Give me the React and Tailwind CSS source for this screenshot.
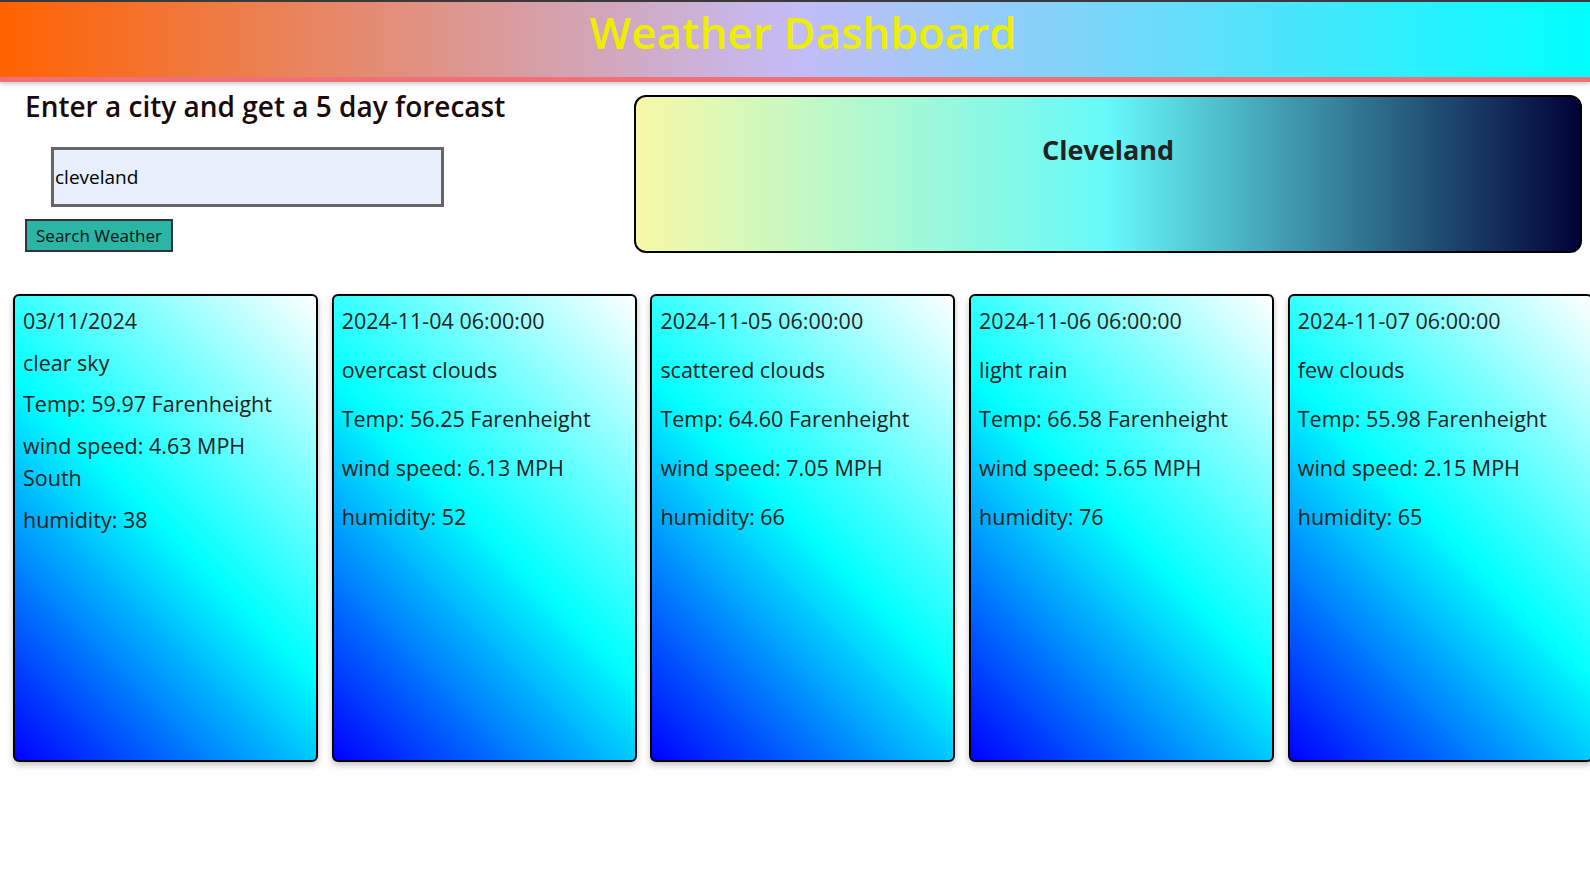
import React from "react";

const font = { fontFamily: '"Open Sans", "Noto Sans", sans-serif' };

const days = [
  { date: "2024-11-04 06:00:00", desc: "overcast clouds", temp: "56.25", wind: "6.13", hum: "52" },
  { date: "2024-11-05 06:00:00", desc: "scattered clouds", temp: "64.60", wind: "7.05", hum: "66" },
  { date: "2024-11-06 06:00:00", desc: "light rain", temp: "66.58", wind: "5.65", hum: "76" },
  { date: "2024-11-07 06:00:00", desc: "few clouds", temp: "55.98", wind: "2.15", hum: "65" },
];

const cardCls =
  "shrink-0 w-[305px] h-[468px] border-2 border-black rounded-[6px] bg-[linear-gradient(45deg,#0000ff,#00ffff,#ffffff)] shadow-[0_3px_6px_rgba(0,0,0,0.25)] px-[8px] pt-[9px] text-[21.5px] leading-[32.5px] text-[#222]";

export default function App() {
  return (
    <div className="min-h-[874px] w-[1590px] overflow-hidden bg-white" style={font}>
      <header className="h-[82px] border-t-2 border-[#3a3a3a] border-b-[5px] border-b-[#f07078] bg-[linear-gradient(to_right,#ff6200,#c4bcf6_50%,#00ffff)] shadow-[0_2px_4px_rgba(0,0,0,0.2)] flex items-center justify-center">
        <h1 className="text-[44px] leading-none font-semibold text-[#eeee00] pl-[16px] pb-[16px]">Weather Dashboard</h1>
      </header>

      <div className="flex pl-[25px] pt-[7px]">
        <div className="w-[609px] shrink-0">
          <h2 className="text-[28px] leading-[34px] font-semibold text-[#1a0a0a]">Enter a city and get a 5 day forecast</h2>
          <input
            readOnly
            value="cleveland"
            className="block mt-[24px] ml-[26px] w-[393px] h-[60px] border-[3px] border-[#666] bg-[#e8f0fe] px-[1px] text-[19px] text-black outline-none"
            style={font}
          />
          <button className="block mt-[12px] w-[148px] h-[33px] border-2 border-[#333] bg-[#2ab5a5] text-[17px] text-[#111] leading-none">
            Search Weather
          </button>
        </div>
        <div className="mt-[6px] w-[948px] h-[158px] border-2 border-black rounded-[12px] bg-[linear-gradient(to_right,#f8f8a6,#66f9f9_50%,#020238)] flex justify-center pt-[36px]">
          <h2 className="text-[27px] leading-[34px] font-bold text-[#222]">Cleveland</h2>
        </div>
      </div>

      <div className="flex gap-[13.7px] pl-[13px] pt-[41px]">
        <div className={cardCls}>
          <p className="mb-[9px]">03/11/2024</p>
          <p className="mb-[9px]">clear sky</p>
          <p className="mb-[9px]">Temp: 59.97 Farenheight</p>
          <p className="mb-[9px]">wind speed: 4.63 MPH<br />South</p>
          <p>humidity: 38</p>
        </div>
        {days.map((d) => (
          <div key={d.date} className={cardCls}>
            <p className="mb-[16.5px]">{d.date}</p>
            <p className="mb-[16.5px]">{d.desc}</p>
            <p className="mb-[16.5px]">Temp: {d.temp} Farenheight</p>
            <p className="mb-[16.5px]">wind speed: {d.wind} MPH</p>
            <p>humidity: {d.hum}</p>
          </div>
        ))}
      </div>
    </div>
  );
}
